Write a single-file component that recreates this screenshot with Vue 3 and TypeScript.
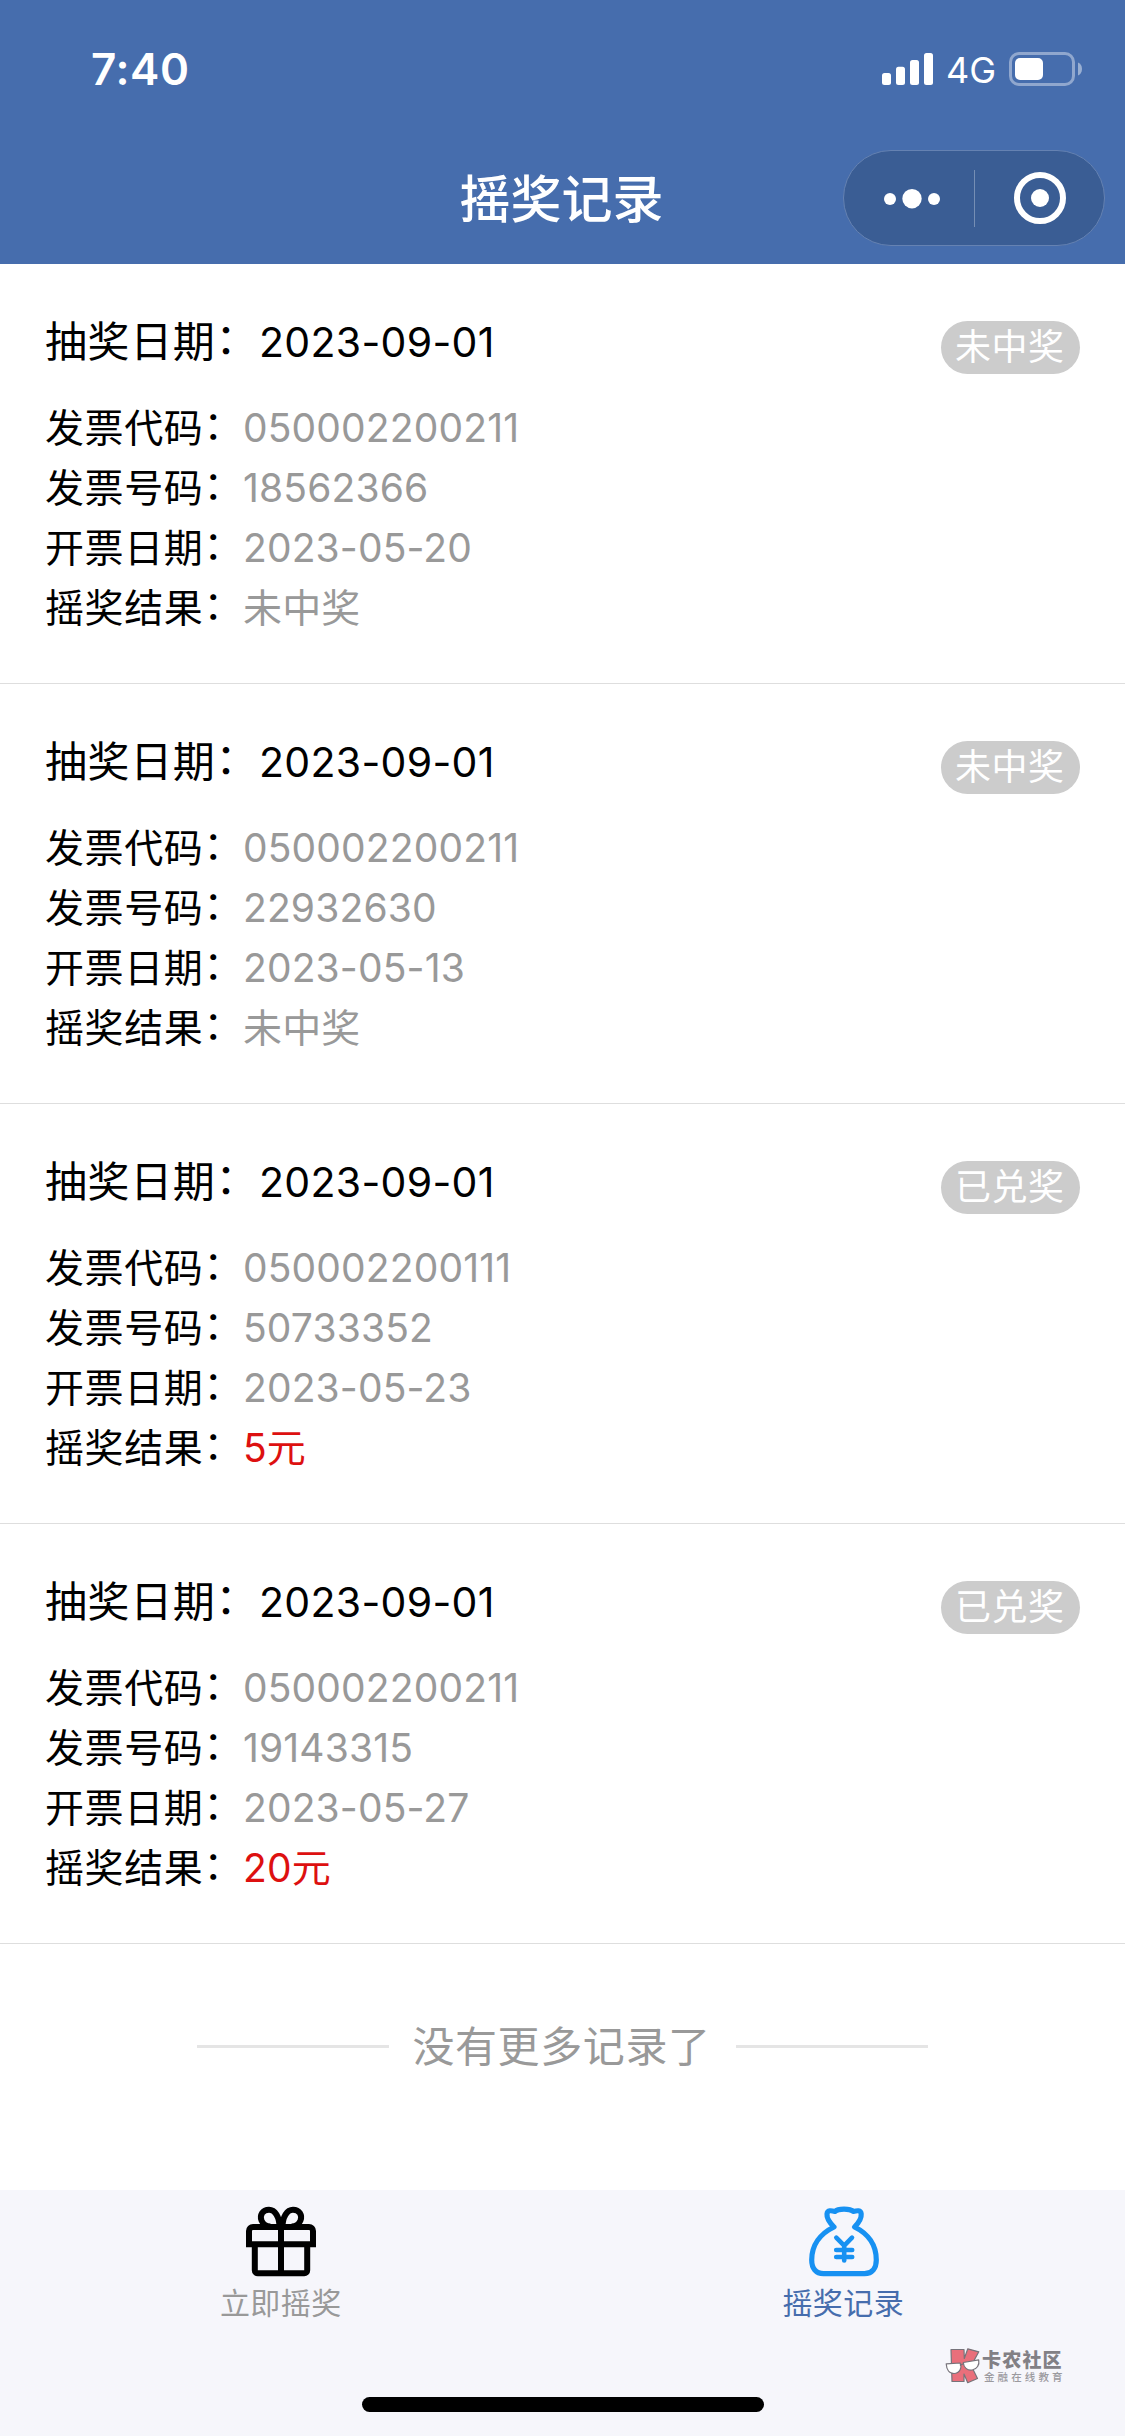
<script setup lang="ts">
interface DrawRecord {
  drawDate: string
  code: string
  number: string
  invoiceDate: string
  result: string
  won: boolean
  badge: string
}

const records: DrawRecord[] = [
  { drawDate: '2023-09-01', code: '050002200211', number: '18562366', invoiceDate: '2023-05-20', result: '未中奖', won: false, badge: '未中奖' },
  { drawDate: '2023-09-01', code: '050002200211', number: '22932630', invoiceDate: '2023-05-13', result: '未中奖', won: false, badge: '未中奖' },
  { drawDate: '2023-09-01', code: '050002200111', number: '50733352', invoiceDate: '2023-05-23', result: '5元', won: true, badge: '已兑奖' },
  { drawDate: '2023-09-01', code: '050002200211', number: '19143315', invoiceDate: '2023-05-27', result: '20元', won: true, badge: '已兑奖' },
]

const fields = (item: DrawRecord) => [
  { label: '发票代码', value: item.code, won: false },
  { label: '发票号码', value: item.number, won: false },
  { label: '开票日期', value: item.invoiceDate, won: false },
  { label: '摇奖结果', value: item.result, won: item.won },
]
</script>

<template>
  <div class="screen">
    <header class="header">
      <div class="status">
        <span class="time">7:40</span>
        <div class="status-right">
          <svg class="signal" width="51" height="32" viewBox="0 0 51 32" fill="#fff">
            <rect x="0" y="20" width="9" height="12" rx="2.5" />
            <rect x="14" y="13.7" width="9" height="18.3" rx="2.5" />
            <rect x="28" y="7" width="9" height="25" rx="2.5" />
            <rect x="42" y="0" width="9" height="32" rx="2.5" />
          </svg>
          <span class="network">4G</span>
          <svg class="battery" width="74" height="34" viewBox="0 0 74 34">
            <rect x="1.5" y="1.5" width="63" height="31" rx="8.5" fill="none" stroke="#fff" stroke-opacity=".4" stroke-width="3" />
            <rect x="6" y="6" width="28" height="22" rx="5" fill="#fff" />
            <path d="M69 10.5c2.600 1 4 3.500 4 6.500s-1.400 5.500-4 6.500z" fill="#fff" fill-opacity=".45" />
          </svg>
        </div>
      </div>
      <div class="navbar">
        <h1 class="title">摇奖记录</h1>
        <div class="capsule">
          <svg width="260" height="94" viewBox="0 0 260 94" fill="#fff">
            <circle cx="46" cy="48" r="6" />
            <circle cx="68" cy="47.700" r="9.700" />
            <circle cx="90" cy="48" r="6" />
            <rect x="130" y="19" width="1" height="57" fill-opacity=".3" />
            <circle cx="196" cy="47" r="23" fill="none" stroke="#fff" stroke-width="6" />
            <circle cx="196" cy="47" r="9" />
          </svg>
        </div>
      </div>
    </header>

    <main class="list">
      <section v-for="item in records" :key="item.number" class="record">
        <div class="record-head">
          <div class="draw"><span class="draw-label">抽奖日期<i class="colon">：</i></span><span class="draw-date">{{ item.drawDate }}</span></div>
          <span class="badge">{{ item.badge }}</span>
        </div>
        <div v-for="field in fields(item)" :key="field.label" class="row">
          <span class="label">{{ field.label }}<i class="colon">：</i></span><span class="value" :class="{ won: field.won }">{{ field.value }}</span>
        </div>
      </section>
      <div class="nomore"><i class="rule"></i><span class="nomore-text">没有更多记录了</span><i class="rule"></i></div>
    </main>

    <footer class="tabbar">
      <div class="tabs">
        <div class="tab">
          <svg class="tab-icon" width="72" height="72" viewBox="0 0 72 72" fill="none" stroke="#000" stroke-width="6">
            <path d="M4 39.300V26a4 4 0 0 1 4-4h56a4 4 0 0 1 4 4v13.300z" />
            <path d="M9.800 39v26.300a3 3 0 0 0 3 3h46.400a3 3 0 0 0 3-3V39M36 21v47" />
            <path d="M34.500 22C34.500 12 30 4.700 24 4.700C17.500 4.700 14.500 10.500 16.500 15.500C18 19.200 21.500 21.500 25.500 21.500M37.500 22C37.500 12 42 4.700 48 4.700C54.500 4.700 57.500 10.500 55.500 15.500C54 19.200 50.500 21.500 46.500 21.500" />
          </svg>
          <span class="tab-text">立即摇奖</span>
        </div>
        <div class="tab active">
          <svg class="tab-icon" width="72" height="72" viewBox="0 0 72 72" fill="none" stroke="#1791f2" stroke-width="5.200" stroke-linejoin="round">
            <path d="M26 22C21.500 17.500 18.600 13 19 9C19.400 4.800 23.500 5.500 27 6.500C30 3.200 42 3.200 45.200 6.500C49 5.500 52.800 4.800 53.200 9C53.600 13 51 17.500 46.500 22C60 28.500 68.300 40 68.300 55C68.300 63.500 64 68.700 56.500 68.700H15.500C8 68.700 3.700 63.500 3.700 55C3.700 40 12.500 28.500 26 22Z" />
            <path d="M28.300 32.700l7.900 8L44 32.700M28.200 45h16M28.200 52h16M36.200 41v14.500" stroke-width="4.600" stroke-linecap="round" />
          </svg>
          <span class="tab-text">摇奖记录</span>
        </div>
      </div>
      <div class="home-indicator"></div>
      <div class="watermark">
        <svg width="36" height="36" viewBox="0 0 36 36" stroke="#77737a" stroke-width="1.200" stroke-linejoin="round">
          <path d="M6 1.500h13l.3 9L22.800.8l11 3-7.600 14L32.500 30.500l-9.800 4.200L19 26v7.500H7z" fill="#e96f7b" />
          <path d="M1.200 15.800l14-.8c2 4.700-.5 10.300-6.200 10.500C4 25.500 1.500 21 1.200 15.800zM18.300 14.500l15.400-2.700c1 5-1.700 9.500-6.500 10.200-5 .7-8.600-2.500-8.900-7.500z" fill="#fff" />
          <path d="M15 17.500q1.700-2 3.500-1" fill="none" />
        </svg>
        <div class="mark-text"><span class="mark-name">卡农社区</span><span class="mark-sub">金融在线教育</span></div>
      </div>
    </footer>
  </div>
</template>

<style>
html,
body {
  margin: 0;
  background: #fff;
}
</style>

<style scoped>
.screen {
  width: 1125px;
  height: 2436px;
  display: flex;
  flex-direction: column;
  overflow: hidden;
  background: #fff;
  color: #000;
  font-family: Inter, 'Noto Sans CJK SC', sans-serif;
}
.header {
  height: 264px;
  flex: none;
  background: #466dad;
  color: #fff;
}
.status {
  height: 138px;
  display: flex;
  align-items: center;
  justify-content: space-between;
  padding: 0 42px 0 91px;
}
.time {
  font-size: 44px;
  line-height: 54px;
  font-weight: 600;
  letter-spacing: 0.6px;
}
.status-right {
  display: flex;
  align-items: center;
}
.network {
  width: 62px;
  padding: 2px 0 0 13px;
  box-sizing: border-box;
  margin-right: 14px;
  font-size: 36px;
  line-height: 42px;
  font-weight: 400;
  white-space: nowrap;
}
.navbar {
  height: 120px;
  display: grid;
  grid-template-columns: 282px 1fr 282px;
  align-items: center;
}
.title {
  grid-column: 2;
  margin: 0;
  text-align: center;
  font-size: 51px;
  line-height: 72px;
  font-weight: 500;
  padding: 3px 2px 0 0;
}
.capsule {
  width: 260px;
  height: 94px;
  border: 1px solid #6582b2;
  border-radius: 48px;
  background: #3a5d94;
}
.capsule svg {
  display: block;
}
.list {
  flex: 1;
}
.record {
  height: 420px;
  box-sizing: border-box;
  padding: 45px 45px 0;
  border-bottom: 1px solid #dedede;
}
.record-head {
  height: 89px;
  display: flex;
  justify-content: space-between;
  align-items: flex-start;
}
.draw {
  display: flex;
  line-height: 66px;
}
.draw-label {
  width: 214px;
  font-size: 42px;
  letter-spacing: 0.6px;
  white-space: nowrap;
}
.colon {
  font-style: normal;
  position: relative;
  top: -3px;
}
.draw-date {
  font-size: 41px;
  letter-spacing: 0.3px;
}
.badge {
  margin-top: 12px;
  height: 53px;
  width: 139px;
  box-sizing: border-box;
  padding-left: 14px;
  border-radius: 27px;
  background: #ccc;
  color: #fff;
  font-size: 36px;
  line-height: 53px;
  letter-spacing: 0.5px;
  white-space: nowrap;
}
.row {
  height: 60px;
  line-height: 60px;
  display: flex;
}
.label {
  width: 198px;
  font-size: 39px;
  letter-spacing: 0.6px;
  white-space: nowrap;
}
.value {
  font-size: 39px;
  color: #999;
  letter-spacing: 0.15px;
}
.value.won {
  color: #dd1010;
}
.nomore {
  width: 731px;
  margin: 69px auto 0;
  height: 66px;
  display: flex;
  align-items: center;
  justify-content: space-between;
}
.rule {
  width: 192px;
  height: 3px;
  background: #e5e5e5;
}
.nomore-text {
  color: #999;
  font-size: 42px;
  line-height: 66px;
  letter-spacing: 0.6px;
  padding: 1px 2px 0 0;
}
.tabbar {
  position: relative;
  height: 246px;
  flex: none;
  background: #f6f6fb;
  display: flex;
  flex-direction: column;
  align-items: center;
}
.tabs {
  width: 100%;
  height: 207px;
  display: flex;
}
.tab {
  flex: 1;
  display: flex;
  flex-direction: column;
  align-items: center;
  padding-top: 15px;
  color: #999;
}
.tab-icon {
  display: block;
}
.tab-text {
  margin-top: 5px;
  padding-right: 1px;
  font-size: 30px;
  line-height: 42px;
  letter-spacing: 0.4px;
}
.tab.active {
  color: #466dad;
}
.home-indicator {
  width: 402px;
  height: 15px;
  border-radius: 8px;
  background: #000;
}
.watermark {
  position: absolute;
  left: 945px;
  top: 158px;
  display: flex;
}
.mark-text {
  display: flex;
  flex-direction: column;
  padding-left: 1px;
  white-space: nowrap;
  font-family: 'Noto Sans CJK SC', sans-serif;
}
.mark-name {
  font-size: 19px;
  line-height: 22px;
  font-weight: 900;
  letter-spacing: 1.2px;
  color: #828085;
}
.mark-sub {
  padding-left: 2px;
  font-size: 10.5px;
  line-height: 14px;
  font-weight: 500;
  letter-spacing: 3.1px;
  color: #9b9a9f;
}
</style>
